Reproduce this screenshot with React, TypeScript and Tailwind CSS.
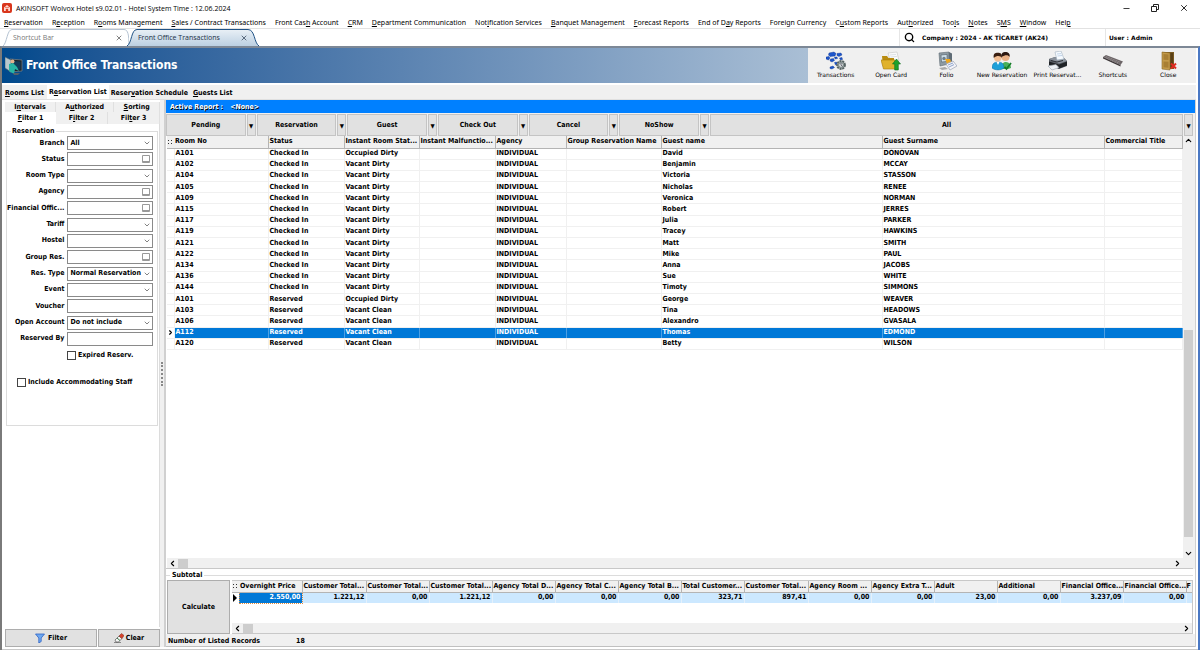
import type { ReactNode } from "react"
import { ChevronDown, ChevronLeft, ChevronRight, ChevronUp, Minus, Search, X } from "lucide-react"

// "&" marks the letter that gets underlined
const Mnemonic = ({ text }: { text: string }) => {
    const i = text.indexOf("&")
    if (i < 0) return <>{text}</>
    return <>{text.slice(0, i)}<span className="underline underline-offset-1">{text[i + 1]}</span>{text.slice(i + 2)}</>
}

const menu = [
    "&Reservation", "R&eception", "R&ooms Management", "&Sales / Contract Transactions", "Front Cas&h Account", "&CRM",
    "&Department Communication", "Not&ification Services", "&Banquet Management", "&Forecast Reports", "End of D&ay Reports",
    "Forei&gn Currency", "C&ustom Reports", "Aut&horized", "Too&ls", "&Notes", "S&MS", "&Window", "Hel&p",
]

const TransactionsIcon = () => (
    <svg viewBox="0 0 20 20" className="size-5">
        <g fill="#1d56cc" stroke="#0b2f8c" strokeWidth=".4">
            <path d="M3 2l5-1 2 1.500-1 2.500-5 .5-1.500-1.500z" />
            <path d="M11 2.500l4-.5 1 2-3 1.500-2-1z" />
            <path d="M0 6l3-.5 1 1.500-1.500 2L0 8z" />
            <path d="M4.500 8l3-.5 1 2L6 11l-2-1z" />
            <path d="M8.500 6h2.500l.5 1.500L9 8z" />
            <path d="M13.500 7l2.500-.5.5 2-2 .5z" />
            <path d="M4 16l3-1 1.500 1.500L6 18l-2-.5z" />
            <path d="M8.500 11.500l2-.5 1 2-2 1z" />
        </g>
        <circle cx="15" cy="14" r="4" fill="#a9b2b2" stroke="#566262" strokeWidth="1.800" strokeDasharray="2 .8" />
        <circle cx="15" cy="14" r="2.400" fill="#dfe4e4" stroke="#5f6d6d" strokeWidth=".8" />
        <path d="M15 12v2.200l1.400 1" stroke="#334" strokeWidth=".7" fill="none" />
    </svg>
)

const OpenCardIcon = () => (
    <svg viewBox="0 0 20 20" className="size-5">
        <path d="M7 2l9-1 2 9-8 2z" fill="#fafafa" stroke="#c4c4c4" strokeWidth=".6" />
        <path d="M9 4l6-.6M9.500 6l6.500-.6" stroke="#c8d0d8" strokeWidth=".6" />
        <path d="M1 5h5l1.500 2H13v9H2z" fill="#b98c10" />
        <path d="M0 9h14l3 9H2.500z" fill="#e0b22c" stroke="#a87c0c" strokeWidth=".6" />
        <path d="M15.500 8l4 5h-2.200v6h-3.600v-6h-2.200z" fill="#1fa12c" stroke="#0c6e18" strokeWidth=".6" />
    </svg>
)

const FolioIcon = () => (
    <svg viewBox="0 0 20 20" className="size-5">
        <path d="M2 2l10-1v12L3 15z" fill="#8e9ba3" stroke="#5d6870" strokeWidth=".6" />
        <path d="M12 1l3 1.500V12l-3 1z" fill="#5f6c76" />
        <path d="M4 4l6-.6v7L4.500 11z" fill="#cfe0ea" stroke="#4f5d66" strokeWidth=".6" />
        <circle cx="7" cy="7.500" r="1.700" fill="#6f7f8a" />
        <path d="M8 8h5l2 5-4 2z" fill="#f0a81c" />
        <path d="M9 13l7-3 4 5-7 4z" fill="#f4f4f8" stroke="#8a93a8" strokeWidth=".6" />
        <path d="M11 14l5-2M12 16l5-2.400" stroke="#5f7fb8" strokeWidth=".7" />
        <path d="M2 17l6-1 3 2-6 1z" fill="#a9a9a9" />
    </svg>
)

const NewReservationIcon = () => (
    <svg viewBox="0 0 20 20" className="size-5">
        <path d="M9 18c0-5 2-7 5-7s5 3 5 6l-3 1z" fill="#49b05a" />
        <circle cx="13.500" cy="6" r="4" fill="#e9b186" />
        <path d="M9.500 6C9 2 11 1 13.500 1S18.500 2.500 17.500 6c-1-2-4-2.500-8 0z" fill="#2a1710" />
        <path d="M0 17c0-4 2-6 6-6s6 2 6 6c-3 2.500-9 2.500-12 0z" fill="#1da0d8" stroke="#0a6da0" strokeWidth=".5" />
        <path d="M4.500 11L6 14l1.500-3z" fill="#fff" />
        <circle cx="5.800" cy="6.800" r="3.800" fill="#f1bd92" />
        <path d="M1.800 7C1 3 3 1.800 5.800 1.800S10.500 3 9.800 7C9 5 5 4 1.800 7z" fill="#3a1e10" />
        <path d="M12.500 16l2 2L19 12" stroke="#157a28" strokeWidth="1.800" fill="none" />
    </svg>
)

const PrintIcon = () => (
    <svg viewBox="0 0 20 20" className="size-5">
        <path d="M2 8l6-2 9 1 3 3v5l-8 3-10-4z" fill="#5b6068" />
        <path d="M2 8l6-2 9 1 3 3-8 2.500z" fill="#8b929c" />
        <path d="M8 1l6-1 3 8-7 1z" fill="#f7fbff" stroke="#9fb0c0" strokeWidth=".6" />
        <path d="M10 3l4-.4M10.500 5l4.500-.5" stroke="#9db8d8" strokeWidth=".6" />
        <path d="M4 9.500l6 1.500 6-1.500" stroke="#2c3036" fill="none" />
        <path d="M2 10.500l10 3v4L2 14.500zM12 13.500l8-3v4l-8 3z" fill="#1f2226" />
        <path d="M1 15l8-1.500 3 3-7 2.500z" fill="#eef2f6" stroke="#9aa4ae" strokeWidth=".6" />
    </svg>
)

const ShortcutsIcon = () => (
    <svg viewBox="0 0 20 20" className="size-5">
        <path d="M0 6l3-2 17 6.500-2.500 3.500z" fill="#6d6668" />
        <path d="M0 6l17.500 8v1.500L0 7.500z" fill="#3c3638" />
        <path d="M3 5.500l14 5.600M2.300 6.400l14 5.900" stroke="#aaa2a4" strokeWidth=".6" strokeDasharray="1.200 .6" />
    </svg>
)

const CloseIcon = () => (
    <svg viewBox="0 0 20 20" className="size-5">
        <path d="M4 1h12v17H4z" fill="#7a5a22" />
        <path d="M11 2h4v15h-4z" fill="#5a4018" />
        <path d="M4 1l8 1v17l-8-1z" fill="#c39a4a" stroke="#8a6826" strokeWidth=".6" />
        <path d="M5.500 3l5 .6v5.400l-5-.3zM5.500 10.500l5 .3v6l-5-.6z" fill="#a87f34" />
        <path d="M13 12.500l5 5M18 12.500l-5 5" stroke="#e02a20" strokeWidth="2" />
    </svg>
)

const tools: { label: string, icon: ReactNode }[] = [
    { label: "Transactions", icon: <TransactionsIcon /> },
    { label: "Open Card", icon: <OpenCardIcon /> },
    { label: "Folio", icon: <FolioIcon /> },
    { label: "New Reservation", icon: <NewReservationIcon /> },
    { label: "Print Reservat...", icon: <PrintIcon /> },
    { label: "Shortcuts", icon: <ShortcutsIcon /> },
    { label: "Close", icon: <CloseIcon /> },
]

const filters: { label: string, kind: "select" | "lookup" | "text", value?: string }[] = [
    { label: "Branch", kind: "select", value: "All" },
    { label: "Status", kind: "lookup" },
    { label: "Room Type", kind: "select" },
    { label: "Agency", kind: "lookup" },
    { label: "Financial Offic...", kind: "lookup" },
    { label: "Tariff", kind: "select" },
    { label: "Hostel", kind: "select" },
    { label: "Group Res.", kind: "lookup" },
    { label: "Res. Type", kind: "select", value: "Normal Reservation" },
    { label: "Event", kind: "select" },
    { label: "Voucher", kind: "text" },
    { label: "Open Account", kind: "select", value: "Do not include" },
    { label: "Reserved By", kind: "text" },
]

const columns = [
    { title: "Room No", width: "w-[94px]" },
    { title: "Status", width: "w-[76px]" },
    { title: "Instant Room Stat...", width: "w-[75px]" },
    { title: "Instant Malfunctio...", width: "w-[76px]" },
    { title: "Agency", width: "w-[71px]" },
    { title: "Group Reservation Name", width: "w-[95px]" },
    { title: "Guest name", width: "w-[221px]" },
    { title: "Guest Surname", width: "w-[222px]" },
    { title: "Commercial Title", width: "" },
]

const guests = [
    ["A101", "Checked In", "Occupied Dirty", "David", "DONOVAN"],
    ["A102", "Checked In", "Vacant Dirty", "Benjamin", "MCCAY"],
    ["A104", "Checked In", "Vacant Dirty", "Victoria", "STASSON"],
    ["A105", "Checked In", "Vacant Dirty", "Nicholas", "RENEE"],
    ["A109", "Checked In", "Vacant Dirty", "Veronica", "NORMAN"],
    ["A115", "Checked In", "Vacant Dirty", "Robert", "JERRES"],
    ["A117", "Checked In", "Vacant Dirty", "Julia", "PARKER"],
    ["A119", "Checked In", "Vacant Dirty", "Tracey", "HAWKINS"],
    ["A121", "Checked In", "Vacant Dirty", "Matt", "SMITH"],
    ["A122", "Checked In", "Vacant Dirty", "Mike", "PAUL"],
    ["A134", "Checked In", "Vacant Dirty", "Anna", "JACOBS"],
    ["A136", "Checked In", "Vacant Dirty", "Sue", "WHITE"],
    ["A144", "Checked In", "Vacant Dirty", "Timoty", "SIMMONS"],
    ["A101", "Reserved", "Occupied Dirty", "George", "WEAVER"],
    ["A103", "Reserved", "Vacant Clean", "Tina", "HEADOWS"],
    ["A106", "Reserved", "Vacant Clean", "Alexandro", "GVASALA"],
    ["A112", "Reserved", "Vacant Clean", "Thomas", "EDMOND"],
    ["A120", "Reserved", "Vacant Clean", "Betty", "WILSON"],
]
const selectedRoom = "A112"

const totals = [
    ["Overnight Price", "2.550,00"],
    ["Customer Total...", "1.221,12"],
    ["Customer Total...", "0,00"],
    ["Customer Total...", "1.221,12"],
    ["Agency Total D...", "0,00"],
    ["Agency Total C...", "0,00"],
    ["Agency Total B...", "0,00"],
    ["Total Customer...", "323,71"],
    ["Customer Total...", "897,41"],
    ["Agency Room ...", "0,00"],
    ["Agency Extra T...", "0,00"],
    ["Adult", "23,00"],
    ["Additional", "0,00"],
    ["Financial Office...", "3.237,09"],
    ["Financial Office...", "0,00"],
]

const TitleBar = () => (
    <header className="flex h-4 items-center pl-[2px] font-['Open_Sans',sans-serif]">
        <svg viewBox="0 0 10 10" className="size-[10px]">
            <rect width="10" height="10" rx="2" fill="#d9361c" />
            <path d="M2 8V4.500L5 2l3 2.500V8H6.200V6H3.800v2z" fill="#ffd9cf" />
            <path d="M3 4l2 1 2-1" stroke="#d9361c" strokeWidth=".7" fill="none" />
        </svg>
        <h1 className="ml-1">AKINSOFT Wolvox Hotel s9.02.01 - Hotel System Time : 12.06.2024</h1>
        <div className="ml-auto flex w-[78px] items-center justify-between pr-[11px]">
            <button aria-label="Minimize"><Minus className="size-[9px]" /></button>
            <button aria-label="Restore">
                <svg viewBox="0 0 8 8" className="size-2" fill="none" stroke="#222">
                    <path d="M.5 2.500h5v5h-5zM2.500 2.500v-2h5v5h-2" />
                </svg>
            </button>
            <button aria-label="Close window"><X className="size-[10px]" /></button>
        </div>
    </header>
)

const DocumentTabs = () => (
    <div className="flex h-[18px] border-t border-[#e2e2e2] pl-[3px] font-['Open_Sans',sans-serif]">
        <div className="relative flex w-[126px] items-center pr-[6px] pl-[10px] text-[#777]">
            <svg viewBox="0 0 126 17" className="absolute inset-0 h-[17px] w-[126px]" fill="#fff" stroke="#b5c3d2">
                <path d="M0 17C4 14 4 .5 9 .5H121C125 .5 126 6 126 17" />
            </svg>
            <button className="relative">Shortcut Bar</button>
            <button className="relative ml-auto" aria-label="Close Shortcut Bar"><X className="size-2 text-[#444]" /></button>
        </div>
        <div className="relative flex w-[131px] items-center pr-3 pl-[9px] text-[#1c2f45]">
            <svg viewBox="0 0 131 17" className="absolute inset-0 h-[17px] w-[131px] overflow-visible" stroke="#1f5285">
                <defs>
                    <linearGradient id="tab" x2="0" y2="1">
                        <stop stopColor="#e9f0f6" />
                        <stop offset="1" stopColor="#bcd0e2" />
                    </linearGradient>
                </defs>
                <path d="M-2 17C3 14 2 .5 8 .5H119C126 .5 125 14 130 17" fill="url(#tab)" />
            </svg>
            <button className="relative">Front Office Transactions</button>
            <button className="relative ml-auto" aria-label="Close Front Office Transactions"><X className="size-2" /></button>
        </div>
        <div className="ml-auto flex items-center font-['DejaVu_Sans',sans-serif] text-[6px] font-bold">
            <div className="flex h-full w-[206px] items-center border-l border-[#e6e6e6] pl-1">
                <button aria-label="Search"><Search strokeWidth={3} className="size-[11px]" /></button>
                <span className="ml-[7px]">Company : 2024 - AK TİCARET (AK24)</span>
            </div>
            <div className="flex h-full w-[95px] items-center border-l border-[#e6e6e6] pl-[3px]">User : Admin</div>
        </div>
    </div>
)

const Banner = () => (
    <div className="flex h-[37px] border-b-2 border-white">
        <div className="flex flex-1 items-center bg-linear-to-r from-[#00498c] to-[#aabfd5] pl-[3px] text-white">
            <svg viewBox="0 0 18 20" className="h-5 w-[18px]">
                <path d="M5 3l12 1v11L5 16z" fill="#1c2228" stroke="#6f7d88" strokeWidth=".8" />
                <path d="M6.500 5l9 .6v8L6.500 14z" fill="#123c58" />
                <path d="M0 1l6 3v12l-6-4z" fill="#b8c8ce" stroke="#52626c" strokeWidth=".6" />
                <circle cx="7.500" cy="5.500" r="2" fill="#e3b58e" />
                <path d="M4 8l4-1 4 4 2 4-4-2-1 5-5-3z" fill="#27b5a5" />
                <path d="M8 17h7l-2 2H9z" fill="#566068" />
            </svg>
            <h2 className="ml-[3px] text-[12px] font-bold">Front Office Transactions</h2>
        </div>
        <div className="grid w-[388px] grid-cols-7 bg-[#f0f0f0] font-['DejaVu_Sans',sans-serif]">
            {tools.map(tool => (
                <button key={tool.label} className="flex flex-col items-center pt-[3px] text-[6px] leading-[8px] font-normal whitespace-nowrap">
                    {tool.icon}
                    {tool.label}
                </button>
            ))}
        </div>
    </div>
)

const FilterField = ({ label, kind, value }: { label: string, kind: string, value?: string }) => {
    const id = label.replace(/\W/g, "").toLowerCase()
    const box = "h-[14px] w-full appearance-none border border-[#8a8a8a] bg-white pr-2 pl-[2px] outline-none"
    return (
        <div className="flex items-center gap-[3px]">
            <label htmlFor={id} className="flex-1 text-right">{label}</label>
            <div className="relative w-[86px]">
                {kind == "select" ? (
                    <>
                        <select id={id} className={box}>
                            <option>{value}</option>
                        </select>
                        <ChevronDown className="pointer-events-none absolute top-[3px] right-[2px] size-2 text-[#444]" />
                    </>
                ) : (
                    <input id={id} type="text" className={box} />
                )}
                {kind == "lookup" && (
                    <button aria-label={`Choose ${label}`} className="absolute top-[3px] right-[3px] h-2 w-2 rounded-[1px] border border-b-2 border-[#999] bg-white" />
                )}
            </div>
        </div>
    )
}

const Sidebar = () => (
    <aside className="flex w-[155px] flex-col">
        <div className="mt-[2px] flex h-[10px] bg-[#f0f0f0]">
            {["I&ntervals", "A&uthorized", "&Sorting"].map(text => (
                <button key={text} className="flex-auto border-r border-[#e0e0e0]"><Mnemonic text={text} /></button>
            ))}
        </div>
        <div className="flex h-3 bg-[#f0f0f0]">
            <button className="flex-1 bg-white"><Mnemonic text="&Filter 1" /></button>
            <button className="flex-1 border-r border-[#e0e0e0]"><Mnemonic text="F&ilter 2" /></button>
            <button className="flex-1 border-r border-[#e0e0e0]"><Mnemonic text="Fil&ter 3" /></button>
        </div>
        <div className="flex-1 border-r border-[#dcdcdc] bg-white px-[1px] pt-[2px]">
            <fieldset className="h-[300px] border border-[#dcdcdc] pr-1">
                <legend className="ml-1 px-[1px] leading-[10px]">Reservation</legend>
                <div className="flex h-[210px] flex-col justify-between">
                    {filters.map(f => <FilterField key={f.label} {...f} />)}
                </div>
                <label className="mt-[5px] ml-[60px] flex items-center gap-[2px]">
                    <input type="checkbox" className="size-[9px] appearance-none border border-[#444] bg-white" />
                    Expired Reserv.
                </label>
                <label className="mt-[18px] ml-[10px] flex items-center gap-[2px]">
                    <input type="checkbox" className="size-[9px] appearance-none border border-[#444] bg-white" />
                    Include Accommodating Staff
                </label>
            </fieldset>
        </div>
        <div className="mt-[2px] flex h-[18px] gap-[1px]">
            <button className="flex w-[92px] items-center justify-center gap-[3px] border border-[#adadad] bg-[#e1e1e1]">
                <svg viewBox="0 0 10 10" className="size-[10px]">
                    <path d="M.5 1h9L6.200 5v3.500L3.800 10V5z" fill="#6ea8f0" stroke="#2f62c4" strokeWidth=".8" />
                </svg>
                Filter
            </button>
            <button className="flex flex-1 items-center justify-center gap-[2px] border border-[#adadad] bg-[#e1e1e1]">
                <svg viewBox="0 0 10 10" className="size-[10px]">
                    <path d="M0 9.500h7" stroke="#888" />
                    <path d="M1 7l4-4 3 2.500L4.500 9H2z" fill="#f4f4f4" stroke="#555" strokeWidth=".7" />
                    <path d="M5 3l2.500-2.500L10 2.500 8 5.500z" fill="#d8432c" stroke="#7c2518" strokeWidth=".5" />
                    <path d="M3 5l3 2.500" stroke="#3a7a48" />
                </svg>
                Clear
            </button>
        </div>
    </aside>
)

const Grip = () => (
    <svg viewBox="0 0 7 8" className="h-2 w-[7px]" fill="#333">
        <path d="M1 2h1v1H1zM4 2h1v1H4zM1 5h1v1H1zM4 5h1v1H4z" />
    </svg>
)

const HorizontalScroll = () => (
    <div className="flex h-[10px] items-center bg-[#f0f0f0] px-[1px]">
        <button aria-label="Scroll left"><ChevronLeft strokeWidth={3} className="size-[9px]" /></button>
        <div className="ml-[1px] h-[9px] w-[10px] bg-[#cdcdcd]" />
        <button aria-label="Scroll right" className="ml-auto"><ChevronRight strokeWidth={3} className="size-[9px]" /></button>
    </div>
)

const GuestTable = () => (
    <table className="h-[214px] w-full table-fixed border-collapse text-left">
        <colgroup>
            <col className="w-[7px]" />
            {columns.map(c => <col key={c.title} className={c.width} />)}
        </colgroup>
        <thead>
            <tr className="h-3">
                <th className="border-b border-[#b4b4b4] bg-[#f0f0f0]"><Grip /></th>
                {columns.map(c => (
                    <th key={c.title} className="overflow-hidden border-r border-b border-[#b4b4b4] bg-[#f0f0f0] pl-[1px]">{c.title}</th>
                ))}
            </tr>
        </thead>
        <tbody>
            {guests.map(([room, status, state, name, surname], i) => {
                const selected = room == selectedRoom
                return (
                    <tr key={i}>
                        <td className="border-r border-b border-[#f0f0f0]">{selected && <ChevronRight strokeWidth={4} className="size-[7px]" />}</td>
                        {[room, status, state, "", "INDIVIDUAL", "", name, surname, ""].map((cell, j) => (
                            <td key={j} className={selected ? "border-r border-b border-r-[#4d9fe3] border-b-[#f0f0f0] bg-[#0078d7] pl-[1px] text-white" : "border-r border-b border-[#f0f0f0] pl-[1px]"}>{cell}</td>
                        ))}
                    </tr>
                )
            })}
        </tbody>
    </table>
)

const Subtotal = () => (
    <section className="mt-[1px] flex flex-col">
        <h3 className="flex h-[10px] items-center gap-[2px] before:h-px before:w-1 before:bg-[#dcdcdc] after:h-px after:flex-1 after:bg-[#dcdcdc]">Subtotal</h3>
        <div className="flex h-[54px] gap-[2px] pl-[1px]">
            <button className="w-[63px] border border-[#adadad] bg-[#e1e1e1]">Calculate</button>
            <div className="flex min-w-0 flex-1 flex-col border-y border-r border-[#c8c8c8] bg-white">
                <div className="flex-1 overflow-hidden">
                    <table className="w-full table-fixed border-collapse">
                        <colgroup>
                            <col className="w-[7px]" />
                            {totals.map((_, i) => <col key={i} className={i % 7 == 1 ? "w-16" : "w-[63px]"} />)}
                            <col />
                        </colgroup>
                        <thead>
                            <tr className="h-[11px] text-left">
                                <th className="border-b border-[#b4b4b4] bg-[#f0f0f0]"><Grip /></th>
                                {totals.map(([title], i) => (
                                    <th key={i} className="overflow-hidden border-r border-b border-[#b4b4b4] bg-[#f0f0f0] pl-[1px]">{title}</th>
                                ))}
                                <th className="border-b border-[#b4b4b4] bg-[#f0f0f0]">F</th>
                            </tr>
                        </thead>
                        <tbody>
                            <tr className="h-[11px] text-right">
                                <td><svg viewBox="0 0 6 8" className="h-2 w-[6px]"><path d="M1 0l4 4-4 4z" /></svg></td>
                                {totals.map(([, value], i) => (
                                    <td key={i} className={i == 0 ? "border border-dotted border-[#e08a3c] bg-[#0078d7] pr-[1px] text-white" : "border-r border-[#e4f0fb] bg-[#cce8ff] pr-[1px]"}>{value}</td>
                                ))}
                                <td className="bg-[#cce8ff]" />
                            </tr>
                        </tbody>
                    </table>
                </div>
                <HorizontalScroll />
            </div>
        </div>
    </section>
)

const Reports = () => (
    <main className="flex min-w-0 flex-1 flex-col border-r border-[#d0d0d0] bg-[#f0f0f0]">
        <div className="flex h-[13px] items-center gap-[7px] bg-[#0080ff] pt-[1px] pl-1 text-white [text-shadow:1px_1px_0_#000]">
            <span>Active Report :</span>
            <span>&lt;None&gt;</span>
        </div>
        <div className="mt-[1px] mr-[2px] flex h-[22px] gap-[1px]">
            <div className="grid w-[543px] grid-cols-6 gap-[1px]">
                {["Pending", "Reservation", "Guest", "Check Out", "Cancel", "NoShow"].map(name => (
                    <div key={name} className="flex gap-[1px]">
                        <button className="flex-1 border border-[#c4c4c4] bg-[#e1e1e1]">{name}</button>
                        <button aria-label={`${name} options`} className="w-[9px] border border-[#c4c4c4] bg-[#e1e1e1] text-[6px]">▼</button>
                    </div>
                ))}
            </div>
            <button className="flex-1 border border-[#c4c4c4] bg-[#e1e1e1]">All</button>
            <button aria-label="All options" className="w-[9px] border border-[#c4c4c4] bg-[#e1e1e1] text-[6px]">▼</button>
        </div>
        <div className="mr-[2px] flex flex-1 border-b border-[#c8c8c8] bg-white">
            <div className="flex min-w-0 flex-1 flex-col justify-between pl-[1px]">
                <GuestTable />
                <HorizontalScroll />
            </div>
            <div className="flex w-[10px] flex-col items-center bg-[#f0f0f0] pb-[10px]">
                <button aria-label="Scroll up"><ChevronUp strokeWidth={3} className="size-[9px]" /></button>
                <div className="mt-auto mb-3 h-[207px] w-[9px] bg-[#cdcdcd]" />
                <button aria-label="Scroll down"><ChevronDown strokeWidth={3} className="size-[9px]" /></button>
            </div>
        </div>
        <div className="bg-white pr-[2px]">
            <Subtotal />
        </div>
        <footer className="flex h-[13px] items-center border-b border-[#c0c0c0] pt-[3px] pl-[2px]">
            <span className="w-32">Number of Listed Records</span>
            <span>18</span>
        </footer>
    </main>
)

const App = () => (
    <div className="flex min-h-screen flex-col bg-white pb-[3px] font-['DejaVu_Sans_Condensed','DejaVu_Sans',sans-serif] text-[7px] leading-[9px] whitespace-nowrap text-black">
        <TitleBar />
        <nav className="flex h-3 items-center gap-[9px] pl-1 font-['Noto_Sans',sans-serif]">
            {menu.map(item => <button key={item}><Mnemonic text={item} /></button>)}
        </nav>
        <DocumentTabs />
        <div className="flex flex-1 flex-col border-t-2 border-r-2 border-l-2 border-t-[#7d8896] border-r-[#4a78c4] border-l-[#7a7a7a] font-bold">
            <div className="flex flex-1 flex-col border-b border-[#c8c8c8] pr-[2px]">
                <Banner />
                <div className="flex h-[15px] items-end border-b border-[#e0e0e0] bg-[#f0f0f0]">
                    <button className="h-3 px-[3px]"><Mnemonic text="&Rooms List" /></button>
                    <button className="h-[14px] bg-white px-[2px]"><Mnemonic text="R&eservation List" /></button>
                    <button className="h-3 px-[2px]"><Mnemonic text="Reser&vation Schedule" /></button>
                    <button className="h-3 px-[3px]"><Mnemonic text="&Guests List" /></button>
                </div>
                <div className="flex flex-1 pb-[2px] pl-[3px]">
                    <Sidebar />
                    <div className="flex w-[6px] items-center justify-center border-r-2 border-[#d0d0d0] bg-[#f0f0f0]">
                        <div className="h-6 border-l-2 border-dotted border-[#888]" />
                    </div>
                    <Reports />
                </div>
            </div>
        </div>
    </div>
)

export default App
